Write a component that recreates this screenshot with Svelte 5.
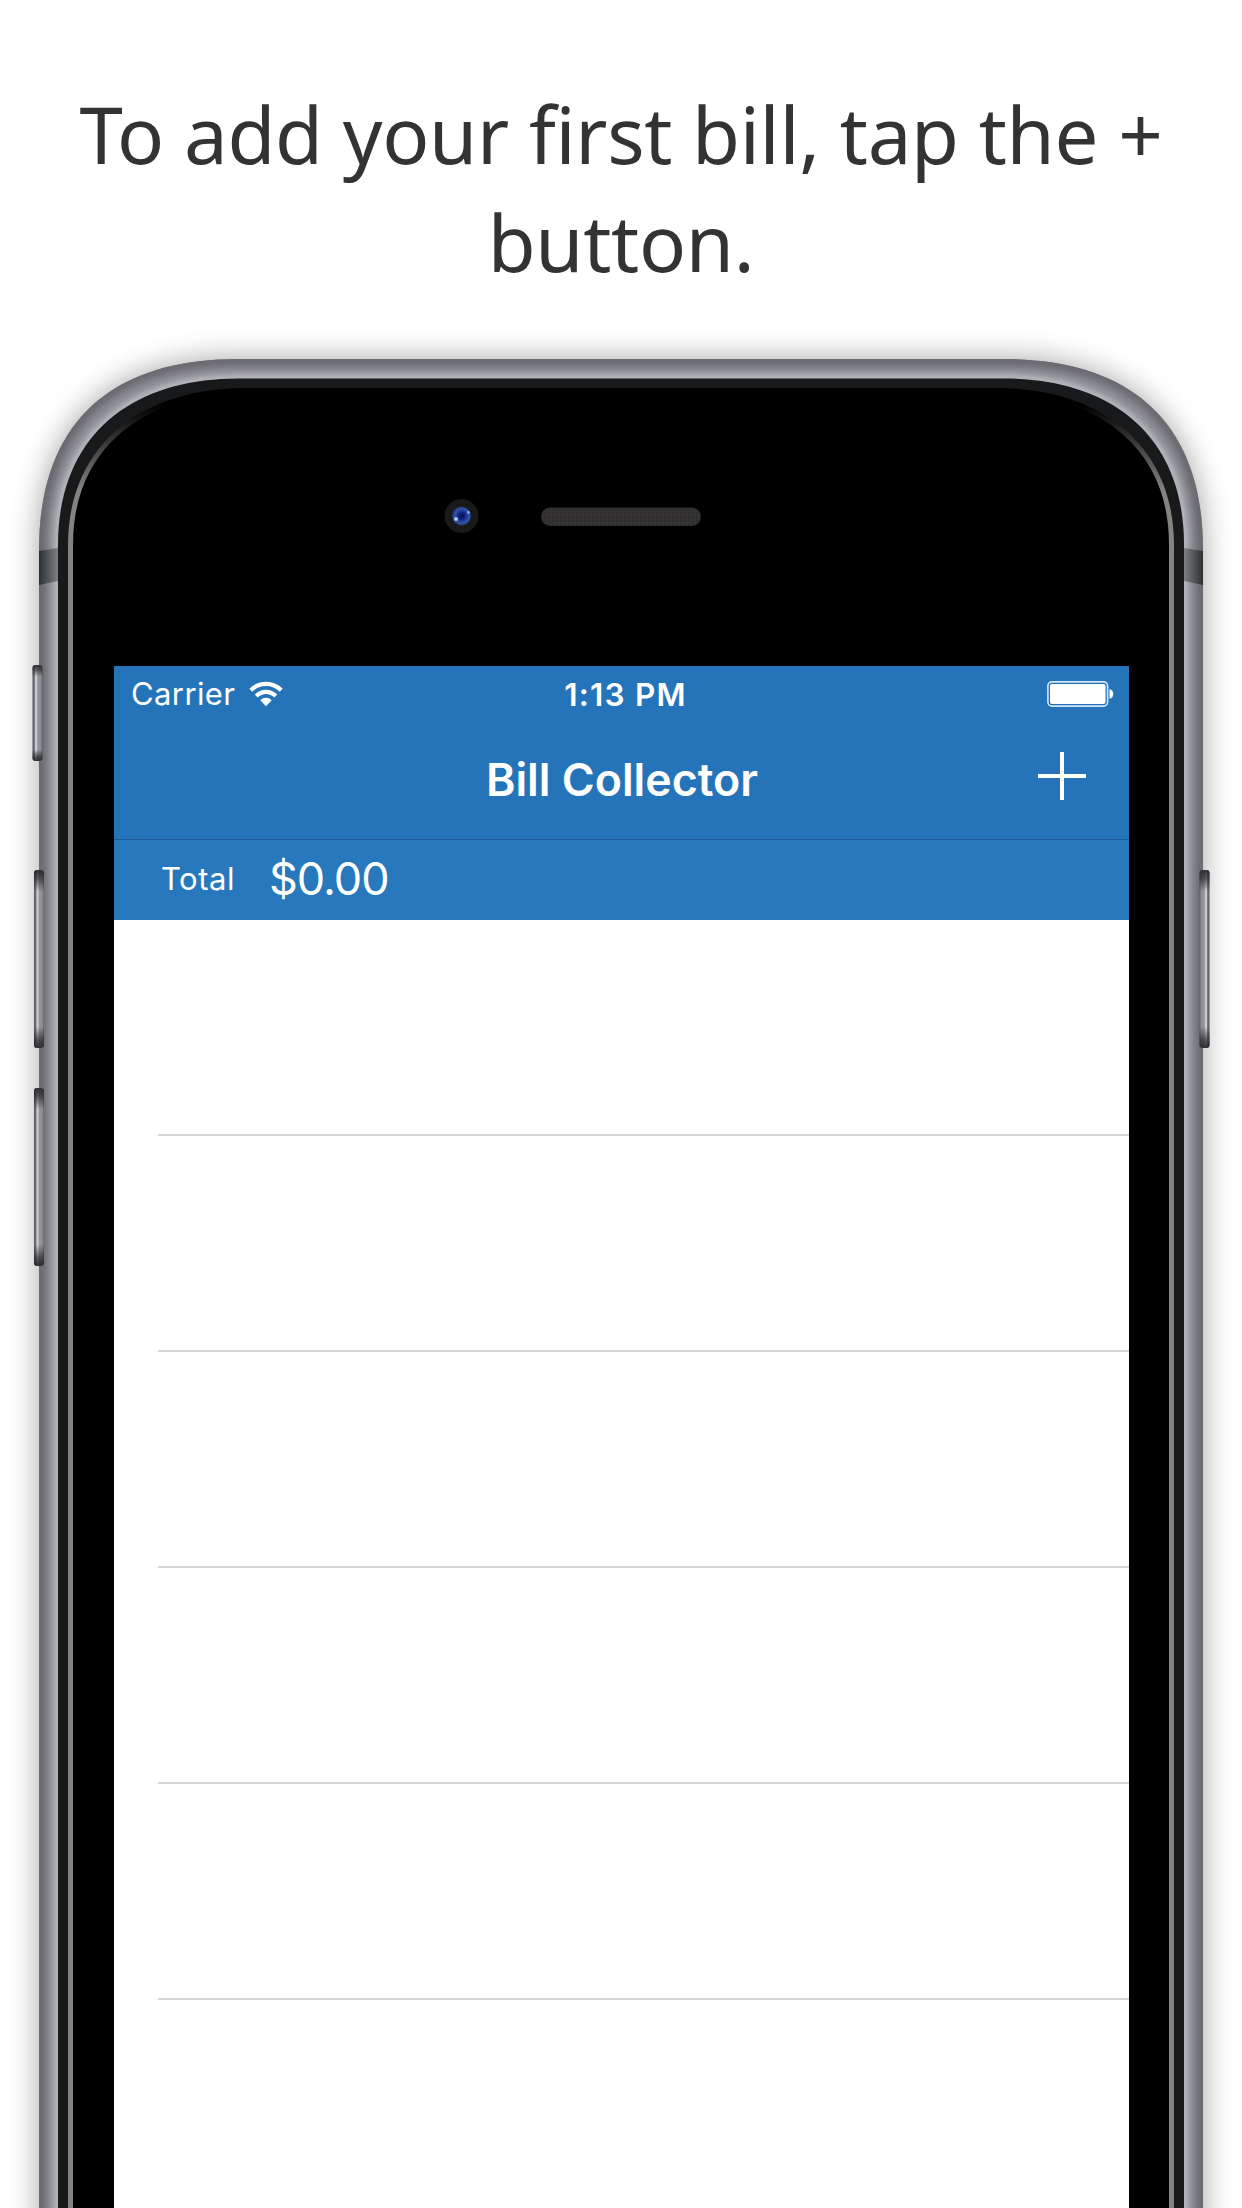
<script>
  const rows = [0, 1, 2, 3, 4];
  const outer = 'M39 2300V550C39 417 117 359 238 359H1004C1125 359 1203 417 1203 550V2300Z';
  const inner = 'M58 2300V545C58 433 134 378.500 238 378.500H1004C1108 378.500 1184 433 1184 545V2300Z';
  const glass = 'M68 2300V545C68 447 139 388 246 388H996C1103 388 1174 447 1174 545V2300Z';
</script>

<main>
  <h1>To add your first bill, tap the + button.</h1>

  <section class="device">
    <svg class="body" width="1242" height="1893" viewBox="0 315 1242 1893" aria-hidden="true">
      <defs>
        <filter id="shadow" x="-20%" y="-10%" width="140%" height="120%">
          <feGaussianBlur stdDeviation="15" />
        </filter>
        <filter id="soft" x="-20%" y="-10%" width="140%" height="120%">
          <feGaussianBlur stdDeviation="3" />
        </filter>
        <filter id="tiny"><feGaussianBlur stdDeviation="0.7" /></filter>
        <clipPath id="shell"><path d={outer} /></clipPath>
        <clipPath id="pane"><path d={glass} /></clipPath>
        <linearGradient id="fade" x1="0" y1="405" x2="0" y2="490" gradientUnits="userSpaceOnUse">
          <stop offset="0" stop-color="#858381" stop-opacity="0" />
          <stop offset="1" stop-color="#858381" />
        </linearGradient>
        <linearGradient id="band" x1="39" x2="58" y1="0" y2="0" gradientUnits="userSpaceOnUse">
          <stop offset="0" stop-color="#2b2f32" />
          <stop offset="0.7" stop-color="#65686a" />
          <stop offset="1" stop-color="#7d7f80" />
        </linearGradient>
        <linearGradient id="key" x1="0" x2="1" y1="0" y2="0">
          <stop offset="0" stop-color="#56575b" />
          <stop offset="0.2" stop-color="#77787c" />
          <stop offset="0.3" stop-color="#cfcfd6" />
          <stop offset="0.43" stop-color="#c2c2ca" />
          <stop offset="0.52" stop-color="#96979c" />
          <stop offset="0.85" stop-color="#8a8b90" />
          <stop offset="1" stop-color="#5f6065" />
        </linearGradient>
        <linearGradient id="ends" x1="0" x2="0" y1="0" y2="1">
          <stop offset="0" stop-color="#222326" stop-opacity="0.9" />
          <stop offset="0.05" stop-color="#222326" stop-opacity="0.65" />
          <stop offset="0.12" stop-color="#222326" stop-opacity="0" />
          <stop offset="0.88" stop-color="#222326" stop-opacity="0" />
          <stop offset="0.95" stop-color="#222326" stop-opacity="0.65" />
          <stop offset="1" stop-color="#222326" stop-opacity="0.9" />
        </linearGradient>
        <radialGradient id="lens" cx="0.52" cy="0.5" r="0.5">
          <stop offset="0" stop-color="#050b4c" />
          <stop offset="0.35" stop-color="#0f2384" />
          <stop offset="0.75" stop-color="#3155ae" />
          <stop offset="1" stop-color="#1f3366" />
        </radialGradient>
        <pattern id="mesh" width="4" height="4" patternUnits="userSpaceOnUse">
          <rect width="4" height="4" fill="#343233" />
          <rect width="2" height="2" fill="#2e2c2d" />
        </pattern>
      </defs>

      <path d={outer} opacity="0.36" filter="url(#shadow)" />
      <path d={outer} fill="#8b8c92" />
      <g clip-path="url(#shell)">
        <path d={outer} fill="none" stroke="#696a6f" stroke-width="14" filter="url(#soft)" />
        <path d={inner} fill="none" stroke="#bdbec4" stroke-width="8" filter="url(#soft)" />
      </g>
      <g id="bandLeft">
        <path d="M39 551L58 548V581L39 585Z" fill="url(#band)" />
      </g>
      <use href="#bandLeft" transform="matrix(-1 0 0 1 1242 0)" />
      <path d={inner} fill="#18191b" />
      <path d={glass} fill="#000" />
      <g clip-path="url(#pane)">
        <path d={glass} fill="none" stroke="url(#fade)" stroke-width="10" filter="url(#tiny)" />
      </g>

      <g id="volume">
        <rect x="34" y="870" width="10" height="178" rx="3" fill="url(#key)" />
        <rect x="34" y="870" width="10" height="178" rx="3" fill="url(#ends)" />
      </g>
      <use href="#volume" y="218" />
      <use href="#volume" transform="matrix(-1 0 0 1 1243.500 0)" />
      <rect x="32.500" y="665" width="10" height="96" rx="3" fill="url(#key)" />
      <rect x="32.500" y="665" width="10" height="96" rx="3" fill="url(#ends)" />

      <circle cx="461.500" cy="516" r="17" fill="#191919" />
      <circle cx="461.500" cy="516" r="9.500" fill="url(#lens)" />
      <circle cx="456" cy="519" r="2" fill="#a9c4ee" filter="url(#tiny)" />
      <circle cx="468.500" cy="512.500" r="1.400" fill="#8aa8e4" filter="url(#tiny)" />
      <rect x="541" y="507.500" width="160" height="18.500" rx="9.250" fill="url(#mesh)" />
    </svg>

    <div class="screen">
      <header>
        <div class="status">
          <div class="carrier">
            <span>Carrier</span>
            <svg width="34" height="26" viewBox="0 0 34 26" aria-hidden="true">
              <g fill="none" stroke="#fff" stroke-width="4.200">
                <path d="M1.800 9.200C10.400 0.800 23.600 0.800 32.200 9.200" />
                <path d="M7.200 15C12.800 9.500 21.200 9.500 26.800 15" />
              </g>
              <path d="M11.300 19.300C14.500 16 19.500 16 22.700 19.300L17 25.200Z" fill="#fff" />
            </svg>
          </div>
          <time>1:13 PM</time>
          <svg class="battery" width="67" height="26" viewBox="0 0 67 26" aria-hidden="true">
            <rect x="0.900" y="0.900" width="59.700" height="24.200" rx="4" fill="none" stroke="#d5e6f6" stroke-width="1.600" />
            <rect x="3" y="3" width="55.500" height="20" rx="2" fill="#fff" />
            <path d="M62.500 8.300C67.500 8.300 67.500 17.700 62.500 17.700Z" fill="#fff" />
          </svg>
        </div>
        <div class="nav">
          <h2>Bill Collector</h2>
          <button aria-label="Add bill">
            <svg width="48" height="48" viewBox="0 0 48 48" aria-hidden="true">
              <path d="M0 24H48M24 0V48" stroke="#fff" stroke-width="4" />
            </svg>
          </button>
        </div>
      </header>
      <div class="total">
        <span>Total</span>
        <strong>$0.00</strong>
      </div>
      <ul>
        {#each rows as row (row)}
          <li></li>
        {/each}
      </ul>
    </div>
  </section>
</main>

<style>
  :global(body) {
    margin: 0;
    background: #fff;
  }
  main {
    width: 1242px;
    height: 2208px;
    overflow: hidden;
    background: #fff;
    display: flex;
    flex-direction: column;
  }
  h1 {
    box-sizing: border-box;
    height: 315px;
    flex: none;
    margin: 0;
    padding: 80px 60px 0;
    font: 400 78px/108px 'Noto Sans', sans-serif;
    letter-spacing: -0.3px;
    color: #333;
    text-align: center;
  }
  .device {
    display: grid;
    height: 1893px;
    font-family: Inter, 'Liberation Sans', sans-serif;
    color: #fff;
  }
  .body,
  .screen {
    grid-area: 1 / 1;
  }
  .body {
    display: block;
  }
  .screen {
    width: 1015px;
    margin: 351px 0 0 114px;
    background: #fff;
    z-index: 1;
  }
  header {
    height: 174px;
    background: #2574ba;
    border-bottom: 1px solid #1b5c98;
    box-sizing: border-box;
  }
  .status {
    display: grid;
    grid-template-columns: 1fr auto 1fr;
    align-items: center;
    height: 56px;
    padding: 0 15px 0 17px;
    font-size: 31px;
  }
  .carrier {
    display: flex;
    align-items: center;
    gap: 14px;
    letter-spacing: 0.4px;
  }
  .carrier span {
    margin-bottom: 1px;
  }
  time {
    font-weight: 600;
    font-size: 31.5px;
    letter-spacing: 1.2px;
    padding-left: 6px;
  }
  .battery {
    justify-self: end;
  }
  .nav {
    display: grid;
    grid-template-columns: 1fr auto 1fr;
    align-items: center;
    height: 116px;
    padding: 0 43px 0 44px;
  }
  h2 {
    grid-column: 2;
    margin: 0;
    font-size: 44.7px;
    font-weight: 600;
  }
  button {
    justify-self: end;
    padding: 0;
    border: 0;
    background: none;
    display: flex;
    margin-bottom: 8px;
  }
  .total {
    height: 80px;
    display: flex;
    align-items: center;
    gap: 34px;
    padding: 0 0 3px 47px;
    background: #2878bd;
    box-sizing: border-box;
  }
  .total span {
    font-size: 31px;
    letter-spacing: 0.5px;
  }
  .total strong {
    font-size: 45px;
    font-weight: 400;
    letter-spacing: -1px;
  }
  ul {
    margin: 0;
    padding: 0 0 0 44px;
    list-style: none;
  }
  li {
    height: 216px;
    box-sizing: border-box;
    border-bottom: 2px solid #d5d5d7;
  }
</style>
